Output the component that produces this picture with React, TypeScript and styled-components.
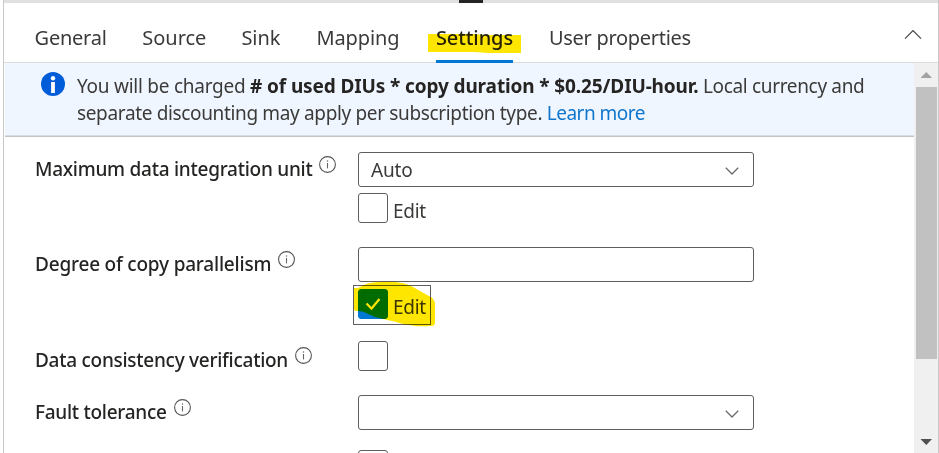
import React from 'react';
import styled, { createGlobalStyle } from 'styled-components';

const GlobalStyle = createGlobalStyle`
  *, *::before, *::after { box-sizing: border-box; }
  body { margin: 0; background: #fff; overflow: hidden; }
`;

const Page = styled.div`
  display: flex;
  flex-direction: column;
  width: 939px;
  height: 453px;
  padding-left: 3px;
  overflow: hidden;
  font-family: "Noto Sans", "Open Sans", sans-serif;
  font-size: 19px;
  color: #3b3a39;
`;

const Panel = styled.section`
  flex: 1;
  min-height: 0;
  display: flex;
  flex-direction: column;
  border-left: 1px solid #c8c8c8;
  border-right: 1px solid #c8c8c8;
`;

const Splitter = styled.div`
  flex: none;
  height: 3px;
  display: flex;
  padding-left: 455px;
  background: #e0e0e0;
`;

const SplitterHandle = styled.div`
  width: 24px;
  height: 3px;
  background: #252423;
`;

const TabBar = styled.nav`
  flex: none;
  height: 60px;
  display: flex;
  padding-left: 30.6px;
  border-bottom: 1px solid #dcdcdc;
`;

const Tab = styled.button<{ $width: number; $gap: number; $spacing?: number; $active?: boolean }>`
  position: relative;
  flex: none;
  width: ${p => p.$width}px;
  height: 60px;
  margin: 0 ${p => p.$gap}px 0 0;
  padding: 11px 0 0;
  border: 0;
  border-bottom: 3px solid ${p => (p.$active ? '#0078d4' : 'transparent')};
  background: none;
  font-family: inherit;
  font-size: 20px;
  line-height: 48px;
  font-weight: ${p => (p.$active ? 500 : 400)};
  letter-spacing: ${p => p.$spacing ?? 0}px;
  color: ${p => (p.$active ? '#252423' : 'inherit')};
  text-align: left;
  white-space: nowrap;
`;

const TabMarker = styled.svg`
  position: absolute;
  left: -8px;
  top: 28px;
  mix-blend-mode: multiply;
`;

const CollapseButton = styled.button`
  margin: 23px 16px 0 auto;
  width: 18px;
  height: 18px;
  padding: 0;
  border: 0;
  background: none;
  display: flex;
`;

const Body = styled.div`
  flex: 1;
  min-height: 0;
  display: flex;
  padding-left: 1px;
`;

const Content = styled.div`
  width: 909px;
  flex: none;
`;

const Banner = styled.div`
  display: flex;
  height: 74px;
  padding: 9px 0 0 36px;
  background: #eff6ff;
  border-bottom: 1px solid #c2c4c7;
  box-shadow: inset 0 -1px 0 #d9dde2;
`;

const BannerIcon = styled.svg`
  flex: none;
  margin-right: 12px;
`;

const BannerText = styled.p`
  margin: 0;
  padding-top: 1px;
  line-height: 27px;
  white-space: nowrap;
`;

const Run = styled.span<{ $spacing: number }>`
  letter-spacing: ${p => p.$spacing}px;
`;

const Strong = styled.strong`
  font-weight: 700;
  letter-spacing: -0.12px;
  color: #252423;
`;

const Link = styled.a`
  color: #1076cc;
  letter-spacing: -0.5px;
  text-decoration: none;
`;

const Form = styled.form`
  display: flex;
  flex-direction: column;
  padding: 15px 0 0 30px;
`;

const Row = styled.div<{ $height: number }>`
  flex: none;
  display: grid;
  grid-template-columns: 323px 396px;
  align-items: start;
  height: ${p => p.$height}px;
`;

const Label = styled.label<{ $spacing: number; $drop?: number }>`
  display: flex;
  gap: 7px;
  padding-top: ${p => p.$drop ?? 0}px;
  line-height: 34px;
  font-weight: 500;
  letter-spacing: ${p => p.$spacing}px;
  color: #252423;
  white-space: nowrap;
`;

const HintIcon = styled.svg`
  flex: none;
  margin-top: 4px;
`;

const Field = styled.div`
  display: flex;
  flex-direction: column;
`;

const Box = styled.div`
  display: flex;
  align-items: center;
  justify-content: space-between;
  height: 35px;
  padding: 1px 13px 0 12px;
  border: 1px solid #605e5c;
  border-radius: 3px;
  background: #fff;
  letter-spacing: -0.15px;
`;

const BoxChevron = styled.svg`
  flex: none;
  margin-top: 2px;
`;

const EditOption = styled.div<{ $focused?: boolean }>`
  position: relative;
  display: flex;
  gap: 5px;
  width: 78px;
  height: 40px;
  margin: ${p => (p.$focused ? 3 : 2)}px 0 0 -5px;
  padding: 3px 0 0 4px;
  border: 1px solid ${p => (p.$focused ? '#605e5c' : 'transparent')};
`;

const EditText = styled.span`
  line-height: 37px;
  letter-spacing: -0.3px;
`;

const CheckBox = styled.span<{ $checked?: boolean }>`
  flex: none;
  display: flex;
  width: 30px;
  height: 30px;
  border: 1px solid ${p => (p.$checked ? '#0078d4' : '#605e5c')};
  border-radius: 3px;
  background: ${p => (p.$checked ? '#0078d4' : '#fff')};
`;

const EditMarker = styled.svg`
  position: absolute;
  left: 0;
  top: -5px;
  mix-blend-mode: multiply;
`;

const Scrollbar = styled.div`
  width: 24px;
  display: flex;
  flex-direction: column;
  align-items: center;
  background: #f0f0f0;
`;

const ScrollArrow = styled.svg`
  flex: none;
`;

const Thumb = styled.div`
  width: 21px;
  height: 272px;
  margin-bottom: auto;
  background: #c1c1c1;
`;

const Hint = () => (
  <HintIcon width="17" height="17" viewBox="0 0 17 17" fill="none">
    <circle cx="8.5" cy="8.5" r="7.9" stroke="#555" strokeWidth="1.1" />
    <path d="M8.5 7v5.4" stroke="#666" strokeWidth="1.1" />
    <circle cx="8.5" cy="4.9" r="0.75" fill="#666" />
  </HintIcon>
);

const ChevronDown = () => (
  <BoxChevron width="16" height="10" viewBox="0 0 16 10" fill="none">
    <path d="M1.8 1.8 8 8l6.2-6.2" stroke="#6a6a6a" strokeWidth="1.3" />
  </BoxChevron>
);

export default function App() {
  return (
    <Page>
      <GlobalStyle />
      <Panel>
        <Splitter><SplitterHandle /></Splitter>
        <TabBar>
          <Tab $width={73} $gap={34.6} $spacing={-0.25}>General</Tab>
          <Tab $width={64} $gap={35.2}>Source</Tab>
          <Tab $width={39} $gap={36}>Sink</Tab>
          <Tab $width={84} $gap={35.6} $spacing={-0.1}>Mapping</Tab>
          <Tab $width={77} $gap={36} $spacing={-0.1} $active>
            Settings
            <TabMarker width="94" height="24" viewBox="0 0 94 24">
              <path d="M0 3h46l10 1h37v18H61l-15-1H0z" fill="#ffe600" />
            </TabMarker>
          </Tab>
          <Tab $width={144} $gap={0} $spacing={-0.3}>User properties</Tab>
          <CollapseButton type="button" aria-label="Collapse">
            <svg width="18" height="18" viewBox="0 0 18 18" fill="none">
              <path d="M1 12.6 9 4.6l8 8" stroke="#444" strokeWidth="1.2" />
            </svg>
          </CollapseButton>
        </TabBar>
        <Body>
          <Content>
            <Banner>
              <BannerIcon width="24" height="24" viewBox="0 0 24 24">
                <circle cx="12" cy="12" r="12" fill="#015cda" />
                <circle cx="12" cy="6.2" r="2.2" fill="#fff" />
                <path d="M10.1 10h3.8v11h-3.8z" fill="#fff" />
              </BannerIcon>
              <BannerText>
                <Run $spacing={-0.25}>You will be charged </Run>
                <Strong># of used DIUs * copy duration * $0.25/DIU-hour.</Strong>
                <Run $spacing={-0.34}> Local currency and</Run>
                <br />
                <Run $spacing={-0.35}>separate discounting may apply per subscription type. </Run>
                <Link>Learn more</Link>
              </BannerText>
            </Banner>
            <Form>
              <Row $height={95}>
                <Label $spacing={-0.26}>Maximum data integration unit<Hint /></Label>
                <Field>
                  <Box>Auto<ChevronDown /></Box>
                  <EditOption><CheckBox /><EditText>Edit</EditText></EditOption>
                </Field>
              </Row>
              <Row $height={94}>
                <Label $spacing={-0.2}>Degree of copy parallelism<Hint /></Label>
                <Field>
                  <Box />
                  <EditOption $focused>
                    <CheckBox $checked>
                      <svg width="28" height="28" viewBox="0 0 28 28" fill="none">
                        <path d="m7.5 13.5 5 5L20.5 9" stroke="#fff" strokeWidth="2.2" />
                      </svg>
                    </CheckBox>
                    <EditText>Edit</EditText>
                    <EditMarker width="84" height="48" viewBox="0 0 84 48">
                      <path
                        d="M0 7h4C10 3 17 1 25 1c14-1 26 0 34 5l14 8c6 3 8 5 8 9v18c0 3-1 4-5 4-14 1-24-1-34-4l-21-5-9-4c-4-2-7-2-11-2L0 28z"
                        fill="#ffe600"
                      />
                    </EditMarker>
                  </EditOption>
                </Field>
              </Row>
              <Row $height={54}>
                <Label $spacing={-0.27} $drop={2}>Data consistency verification<Hint /></Label>
                <CheckBox />
              </Row>
              <Row $height={55}>
                <Label $spacing={-0.28}>Fault tolerance<Hint /></Label>
                <Box><span /><ChevronDown /></Box>
              </Row>
              <Row $height={30}>
                <span />
                <CheckBox />
              </Row>
            </Form>
          </Content>
          <Scrollbar>
            <ScrollArrow width="24" height="24" viewBox="0 0 24 24">
              <path d="M6.5 15h11.5L12.3 9z" fill="#a3a3a3" />
            </ScrollArrow>
            <Thumb />
            <ScrollArrow width="24" height="24" viewBox="0 0 24 24">
              <path d="M6.5 10h11.5L12.3 16z" fill="#505050" />
            </ScrollArrow>
          </Scrollbar>
        </Body>
      </Panel>
    </Page>
  );
}
